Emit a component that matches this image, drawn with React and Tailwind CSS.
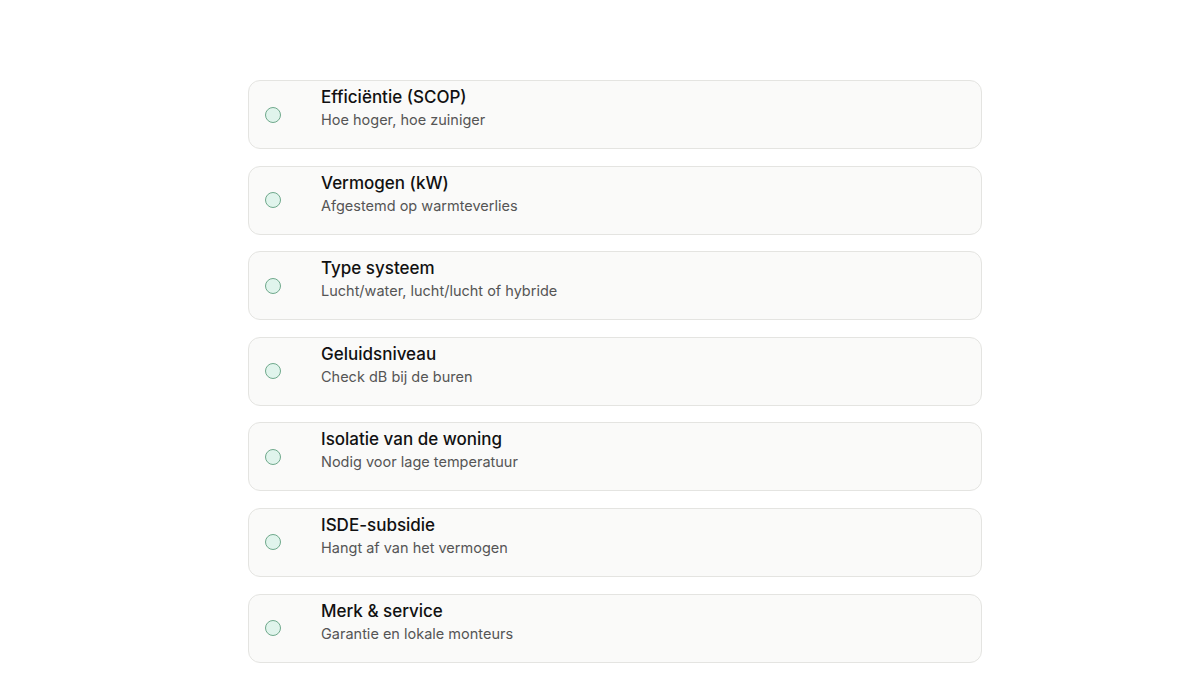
const items = [
  { title: 'Efficiëntie (SCOP)', desc: 'Hoe hoger, hoe zuiniger' },
  { title: 'Vermogen (kW)', desc: 'Afgestemd op warmteverlies' },
  { title: 'Type systeem', desc: 'Lucht/water, lucht/lucht of hybride' },
  { title: 'Geluidsniveau', desc: 'Check dB bij de buren' },
  { title: 'Isolatie van de woning', desc: 'Nodig voor lage temperatuur' },
  { title: 'ISDE-subsidie', desc: 'Hangt af van het vermogen' },
  { title: 'Merk & service', desc: 'Garantie en lokale monteurs' },
]

function App() {
  return (
    <div className="min-h-[700px] bg-white pt-[80px] font-['Inter','Liberation_Sans',sans-serif]">
      <ul className="ml-[248px] flex w-[734px] flex-col gap-[16.6px]">
        {items.map((item) => (
          <li
            key={item.title}
            className="flex h-[69px] items-center rounded-xl border border-[#e4e4e1] bg-[#fafaf9] pl-4"
          >
            <span className="h-4 w-4 shrink-0 rounded-full border border-[#6fa98c] bg-[#e0f4ec]" />
            <div className="ml-[40px] flex flex-col self-start pt-[5px]">
              <span className="text-[17px] font-medium leading-[22px] text-[#111]">{item.title}</span>
              <span className="mt-px text-[14.5px] leading-[22px] text-[#555]">{item.desc}</span>
            </div>
          </li>
        ))}
      </ul>
    </div>
  )
}

export default App
